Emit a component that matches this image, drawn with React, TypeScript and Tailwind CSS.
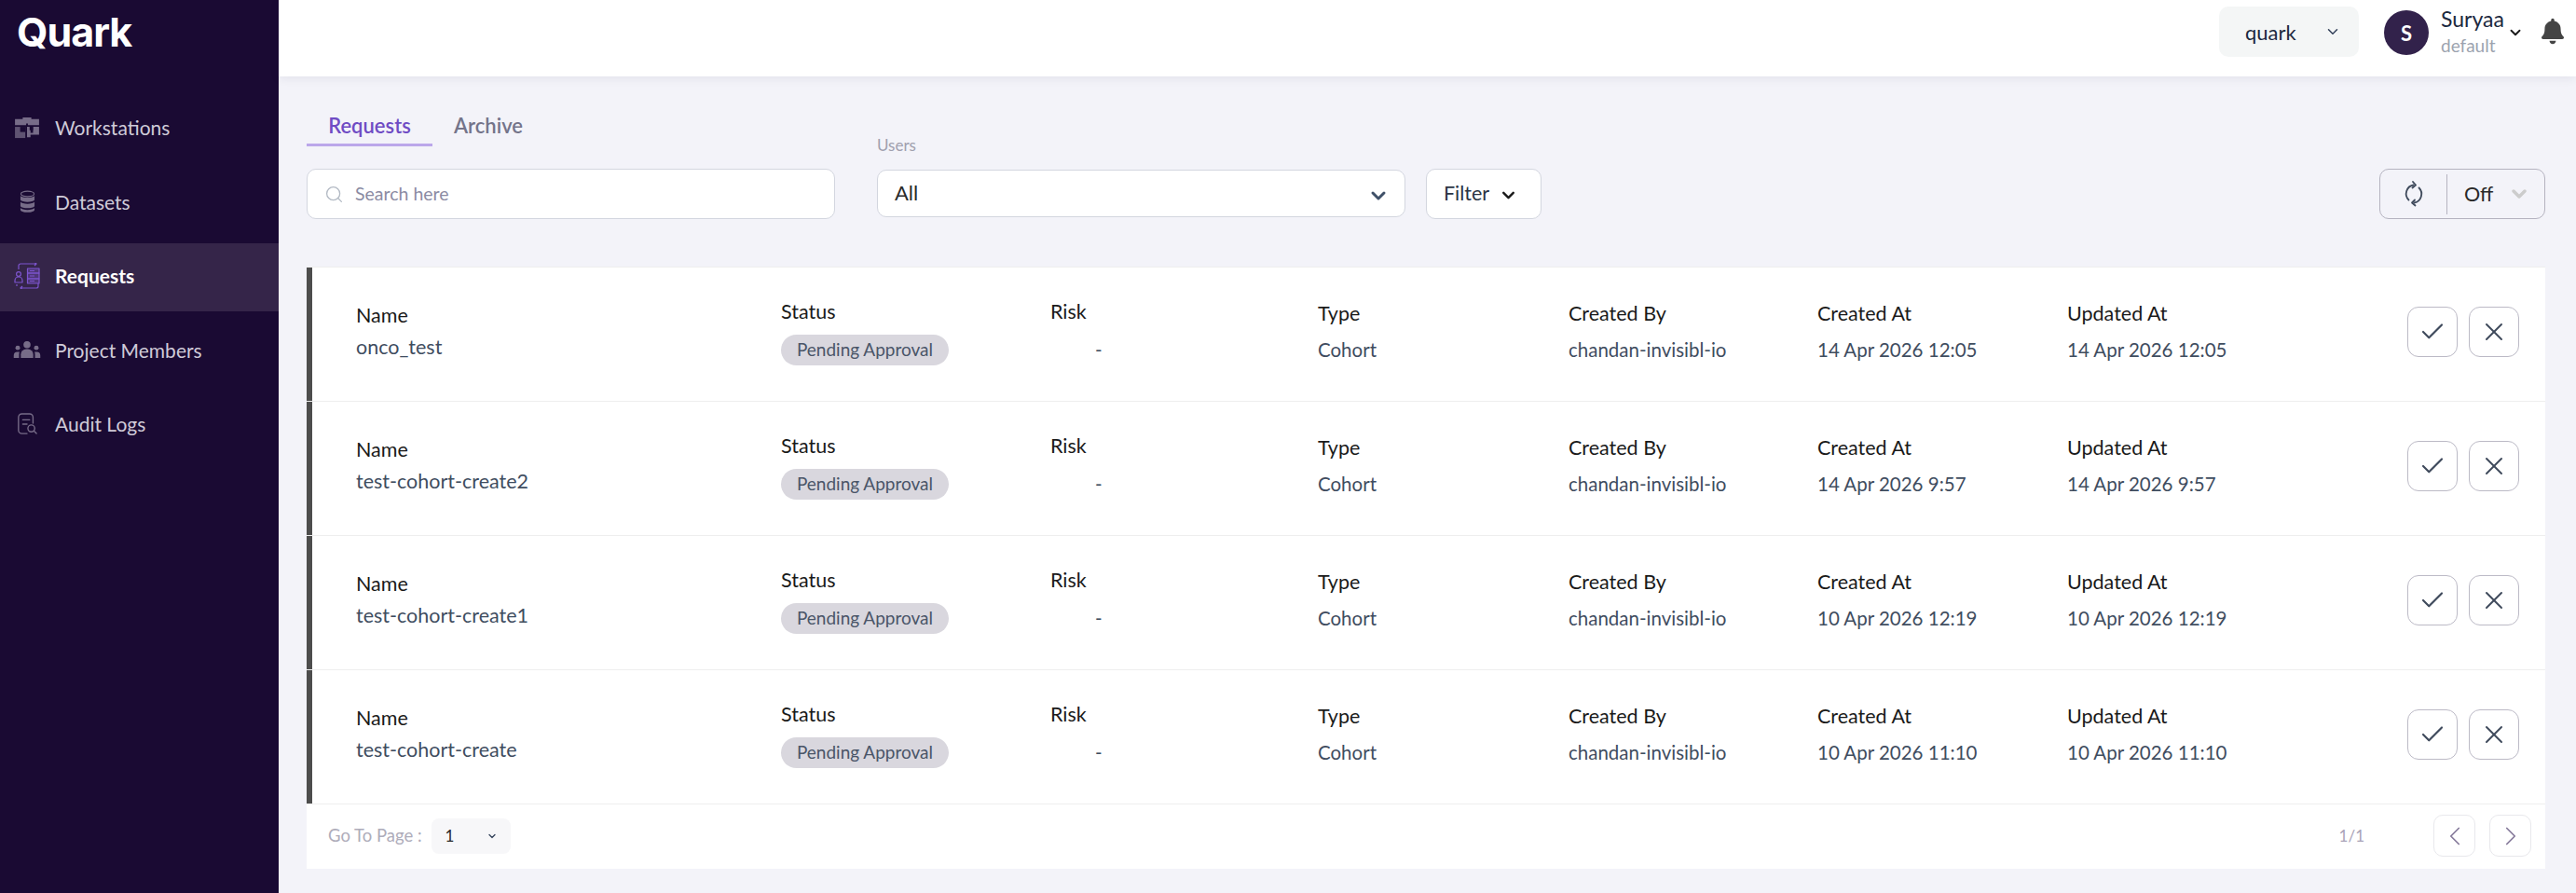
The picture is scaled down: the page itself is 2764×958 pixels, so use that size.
import { Check, ChevronDown, ChevronLeft, ChevronRight, Search, X } from "lucide-react";
import { FaBell } from "react-icons/fa";

const requests = [
  { name: "onco_test", created: "14 Apr 2026 12:05", updated: "14 Apr 2026 12:05" },
  { name: "test-cohort-create2", created: "14 Apr 2026 9:57", updated: "14 Apr 2026 9:57" },
  { name: "test-cohort-create1", created: "10 Apr 2026 12:19", updated: "10 Apr 2026 12:19" },
  { name: "test-cohort-create", created: "10 Apr 2026 11:10", updated: "10 Apr 2026 11:10" },
];

function WorkstationsIcon() {
  return (
    <svg viewBox="0 0 30 26" className="w-[28px] h-[24px] text-[#776c88]" fill="currentColor">
      <path d="M10 3V1h10v2h9v7H16V8h-2v2H1V3z" />
      <path d="M1 12h12v13H1z" opacity="0.75" />
      <path d="M7 12h6v6H7z" fill="#1a0a33" />
      <path d="M15 12h3v4h4v-4h7v9H19v3h-4z" />
      <path d="M19 12h3v7h-3z" fill="#1a0a33" />
    </svg>
  );
}

function DatasetsIcon() {
  return (
    <svg viewBox="0 0 18 26" className="w-[17px] h-[25px] text-[#776c88]" fill="currentColor">
      <ellipse cx="9" cy="4" rx="7.5" ry="3" fill="none" stroke="currentColor" strokeWidth="1.2" />
      <path d="M1 6c2 3 14 3 16 0v5c-2 3-14 3-16 0z" />
      <path d="M1 13c2 3 14 3 16 0v5c-2 3-14 3-16 0z" />
      <path d="M1 20c2 3 14 3 16 0v2c0 4-16 4-16 0z" />
    </svg>
  );
}

function RequestsIcon() {
  return (
    <svg viewBox="0 0 28 28" className="w-[28px] h-[28px] text-[#7d55cf]" fill="none" stroke="currentColor" strokeWidth="1.2" strokeLinejoin="round">
      <path d="M5 7V3a2 2 0 0 1 2-2h17M22 -1l2 2-2 2" />
      <path d="M26 22v3a2 2 0 0 1-2 2H7M9 25l-2 2 2 2" />
      <path d="M3 23v2" />
      <circle cx="5" cy="12" r="2.4" />
      <path d="M1 21v-2a4 4 0 0 1 8 0v2z" />
      <rect x="14.5" y="6" width="12.5" height="5" fill="currentColor" fillOpacity="0.35" />
      <rect x="14.5" y="11" width="12.5" height="6" fill="currentColor" fillOpacity="0.35" />
      <rect x="14.5" y="17" width="12.5" height="5" fill="currentColor" fillOpacity="0.35" />
      <path d="M17 8.5h5M17 14h5M17 19.5h5" />
    </svg>
  );
}

function MembersIcon() {
  return (
    <svg viewBox="0 0 30 20" className="w-[30px] h-[19px] text-[#776c88]" fill="currentColor">
      <circle cx="15" cy="4" r="4" />
      <path d="M8 19v-4a6 6 0 0 1 6-6h2a6 6 0 0 1 6 6v4z" />
      <circle cx="4.5" cy="7.5" r="2.6" />
      <path d="M0 19v-3a4 4 0 0 1 4-4h2.5A8 8 0 0 0 6 15v4z" />
      <circle cx="25.5" cy="7.5" r="2.6" />
      <path d="M30 19v-3a4 4 0 0 0-4-4h-2.5a8 8 0 0 1 .5 3v4z" />
    </svg>
  );
}

function AuditIcon() {
  return (
    <svg viewBox="0 0 24 26" className="w-[22px] h-[24px] text-[#776c88]" fill="none" stroke="currentColor" strokeWidth="1.5" strokeLinecap="round">
      <path d="M12 24H6a4 4 0 0 1-4-4V5a4 4 0 0 1 4-4h9a4 4 0 0 1 4 4v7" />
      <path d="M7 8h8M7 13h5" />
      <circle cx="17" cy="18" r="4" />
      <path d="M20 21l3 3" />
    </svg>
  );
}

function RefreshIcon() {
  return (
    <svg viewBox="0 0 24 28" className="w-[24px] h-[28px] text-[#3f4a5c]" fill="none" stroke="currentColor" strokeWidth="1.8" strokeLinecap="round" strokeLinejoin="round">
      <path d="M11.5 4.5a9.5 9.5 0 0 0-5 16" />
      <path d="M12.5 23.5a9.5 9.5 0 0 0 5-16" />
      <path d="M11 1l3 3.5-3.5 3" />
      <path d="M13 20.5l-3 3 3.5 3" />
    </svg>
  );
}

const navItems = [
  { label: "Workstations", icon: <WorkstationsIcon /> },
  { label: "Datasets", icon: <DatasetsIcon /> },
  { label: "Requests", icon: <RequestsIcon />, active: true },
  { label: "Project Members", icon: <MembersIcon /> },
  { label: "Audit Logs", icon: <AuditIcon /> },
];

function Sidebar() {
  return (
    <aside className="w-[299px] shrink-0 bg-[#1a0a33]">
      <div className="h-[61px] pl-[18px] pt-[9px] text-[43px] leading-[50px] font-bold text-white font-[Inter,sans-serif] tracking-[-1px]">
        Quark
      </div>
      <nav className="mt-[41px] flex flex-col gap-[6.5px]">
        {navItems.map((item) => (
          <div
            key={item.label}
            className={`h-[73px] pb-[3px] flex items-center ${item.active ? "bg-[#352549]" : ""}`}
          >
            <div className="w-[59px] pl-[14px] flex justify-center pr-[15px]">{item.icon}</div>
            <span className={`text-[21px] ${item.active ? "font-bold text-white text-[21.5px]" : "text-[#cfcad8]"}`}>
              {item.label}
            </span>
          </div>
        ))}
      </nav>
    </aside>
  );
}

function Header() {
  return (
    <header className="h-[82px] shrink-0 bg-white shadow-[0_2px_10px_rgba(30,20,60,0.08)] flex items-start justify-end pr-[13px] relative">
      <div className="mt-[7px] w-[150px] h-[54px] rounded-[10px] bg-[#f4f6f6] flex items-center pl-[28px] pr-[19px] justify-between text-[#1c2940] text-[22px]">
        quark
        <ChevronDown className="w-[18px] h-[18px] text-[#33415a]" />
      </div>
      <div className="mt-[11px] ml-[27px] w-[48px] h-[48px] rounded-full bg-[#32224b] text-white font-bold text-[22px] flex items-center justify-center">
        S
      </div>
      <div className="ml-[13px] mt-[6px] w-[68px]">
        <div className="text-[#1c2940] text-[23px] leading-[28px]">Suryaa</div>
        <div className="text-[#9ca3af] text-[19px] leading-[24px] mt-[3px]">default</div>
      </div>
      <ChevronDown className="mt-[26px] ml-[3px] w-[18px] h-[18px] text-[#1a1a1a]" strokeWidth={2.5} />
      <FaBell className="mt-[18px] ml-[19px] w-[24px] h-[31px] text-[#444444]" />
    </header>
  );
}

function Toolbar() {
  return (
    <div className="flex items-end">
      <div className="w-[567px]">
        <div className="flex text-[22px] leading-[28px]">
          <div className="w-[135px] text-center pb-[5px] border-b-[3px] border-[#bba7ea] font-semibold text-[#6f4cc4]">Requests</div>
          <div className="ml-[23px] text-[#74748a] font-semibold">Archive</div>
        </div>
        <div className="mt-[24px] h-[54px] rounded-[10px] border border-[#d3d6df] bg-white flex items-center pl-[18px]">
          <Search className="w-[21px] h-[21px] text-[#b3bac4]" strokeWidth={1.5} />
          <span className="ml-[12px] text-[19.5px] text-[#8b8ba3]">Search here</span>
        </div>
      </div>
      <div className="ml-[45px] mb-[2px]">
        <div className="text-[17px] leading-[20px] text-[#a0a0ae] mb-[16px]">Users</div>
        <div className="w-[567px] h-[51px] rounded-[10px] border border-[#d3d6df] bg-white flex items-center justify-between pl-[18px] pr-[16px]">
          <span className="text-[22px] text-[#2a2a2a] -mt-[2px]">All</span>
          <ChevronDown className="w-[24px] h-[24px] mt-[4px] text-[#3f5068]" strokeWidth={3} />
        </div>
      </div>
      <div className="ml-[22px] w-[124px] h-[54px] rounded-[10px] border border-[#d3d6df] bg-white flex items-center pl-[18px] gap-[10px]">
        <span className="text-[21.5px] text-[#2b3444] -mt-[1px]">Filter</span>
        <ChevronDown className="w-[21px] h-[21px] mt-[3px] text-[#1a1a1a]" strokeWidth={2.8} />
      </div>
      <div className="ml-auto w-[178px] h-[54px] rounded-[10px] border border-[#b5b3c0] flex items-center">
        <div className="w-[71px] flex justify-center"><RefreshIcon /></div>
        <div className="w-px h-[43px] bg-[#b5b3c0]" />
        <span className="ml-[18px] text-[21.5px] text-[#2a2a2a]">Off</span>
        <ChevronDown className="ml-[16px] w-[24px] h-[24px] text-[#cccccc]" strokeWidth={3.5} />
      </div>
    </div>
  );
}

function Row({ name, created, updated }: { name: string; created: string; updated: string }) {
  const label = "text-[21.5px] leading-[24px] text-[#1a1a1a]";
  const value = "text-[20.5px] leading-[24px] text-[#3f4d5f]";
  return (
    <div className="h-[144px] flex border-b border-[#eeeeee]">
      <div className="w-[6px] bg-[#4d4d4d]" />
      <div className="w-[503px] pl-[47px] pt-[39px]">
        <div className={label}>Name</div>
        <div className="text-[21.5px] leading-[24px] text-[#3f4d5f] mt-[10px]">{name}</div>
      </div>
      <div className="w-[289px] pt-[35px]">
        <div className={label}>Status</div>
        <div className="mt-[13px] w-[180px] h-[33px] rounded-full bg-[#d9d7de] text-[19px] leading-[32px] text-center text-[#4a5568]">
          Pending Approval
        </div>
      </div>
      <div className="w-[287px] pt-[35px]">
        <div className={label}>Risk</div>
        <div className={`${value} mt-[17px] pl-[48px]`}>-</div>
      </div>
      <div className="w-[269px] pt-[37px]">
        <div className={label}>Type</div>
        <div className={`${value} mt-[15px]`}>Cohort</div>
      </div>
      <div className="w-[267px] pt-[37px]">
        <div className={label}>Created By</div>
        <div className={`${value} mt-[15px]`}>chandan-invisibl-io</div>
      </div>
      <div className="w-[268px] pt-[37px]">
        <div className={label}>Created At</div>
        <div className={`${value} mt-[15px]`}>{created}</div>
      </div>
      <div className="w-[365px] pt-[37px]">
        <div className={label}>Updated At</div>
        <div className={`${value} mt-[15px]`}>{updated}</div>
      </div>
      <div className="flex gap-[12px] pt-[42px]">
        <button className="w-[54px] h-[54px] rounded-[12px] border border-[#bcbac6] flex items-center justify-center">
          <Check className="w-[30px] h-[30px] text-[#3f4a5c]" strokeWidth={1.7} />
        </button>
        <button className="w-[54px] h-[54px] rounded-[12px] border border-[#bcbac6] flex items-center justify-center">
          <X className="w-[32px] h-[32px] text-[#3f4a5c]" strokeWidth={1.5} />
        </button>
      </div>
    </div>
  );
}

function Footer() {
  return (
    <div className="h-[69px] pb-[2px] flex items-center pl-[23px] pr-[15px]">
      <span className="text-[18.5px] text-[#aeacba]">Go To Page :</span>
      <div className="ml-[10px] w-[85px] h-[38px] rounded-[8px] bg-[#f7f7f9] flex items-center justify-between pl-[15px] pr-[14px] text-[17px] text-[#2a2a2a]">
        1
        <ChevronDown className="w-[12px] h-[12px] text-[#33415a]" strokeWidth={2.5} />
      </div>
      <span className="ml-auto text-[17px] text-[#a9a3b8]">1/1</span>
      <button className="ml-[74px] w-[45px] h-[45px] rounded-[10px] border border-[#e8e8ec] flex items-center justify-center">
        <ChevronLeft className="w-[34px] h-[34px] text-[#85799a]" strokeWidth={1.2} />
      </button>
      <button className="ml-[15px] w-[45px] h-[45px] rounded-[10px] border border-[#e8e8ec] flex items-center justify-center">
        <ChevronRight className="w-[34px] h-[34px] text-[#85799a]" strokeWidth={1.2} />
      </button>
    </div>
  );
}

export default function App() {
  return (
    <div className="flex h-screen overflow-hidden bg-[#f3f3f9] font-[Lato,sans-serif]">
      <Sidebar />
      <div className="flex-1 flex flex-col min-w-0">
        <Header />
        <main className="pl-[30px] pr-[33px] pt-[39px]">
          <Toolbar />
          <div className="mt-[51px] bg-white border-t border-[#eeeeee]">
            {requests.map((r) => (
              <Row key={r.name} {...r} />
            ))}
            <Footer />
          </div>
        </main>
      </div>
    </div>
  );
}
